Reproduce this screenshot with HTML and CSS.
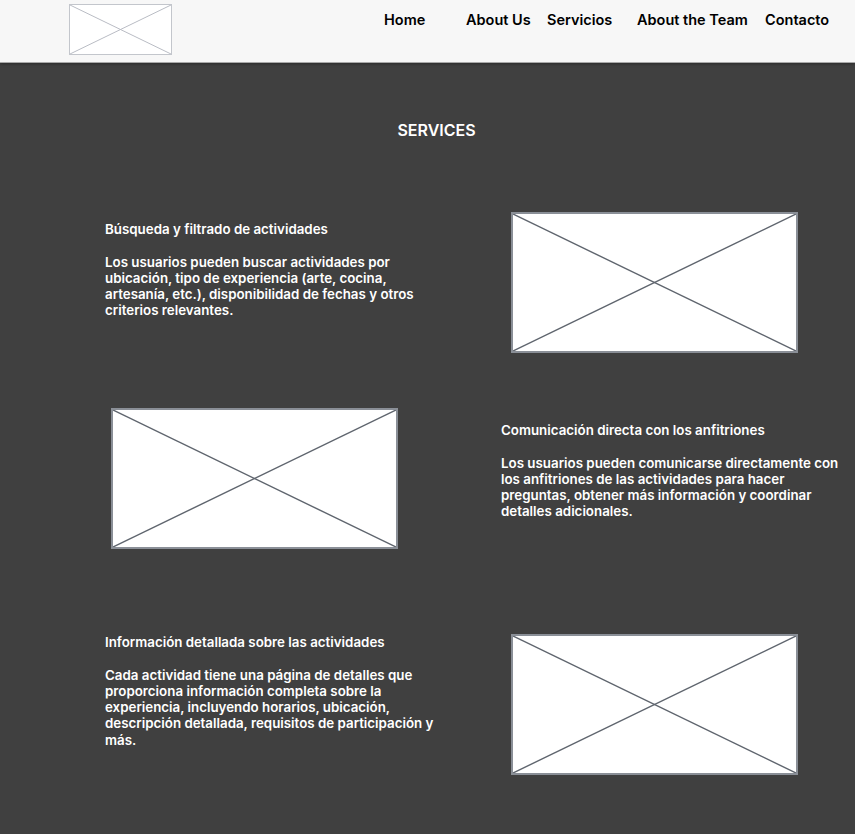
FILE: index.html
```html
<!DOCTYPE html>
<html lang="es">
<head>
<meta charset="utf-8">
<title>Services</title>
<link rel="stylesheet" href="styles.css">
</head>
<body>
<header class="topbar">
  <div class="logo">
    <svg viewBox="0 0 100 50" preserveAspectRatio="none" width="100%" height="100%">
      <line x1="0" y1="0" x2="100" y2="50" vector-effect="non-scaling-stroke"/>
      <line x1="100" y1="0" x2="0" y2="50" vector-effect="non-scaling-stroke"/>
    </svg>
  </div>
  <nav class="nav">
    <a class="nav-item nav-home" href="#">Home</a>
    <a class="nav-item nav-about" href="#">About Us</a>
    <a class="nav-item nav-serv" href="#">Servicios</a>
    <a class="nav-item nav-team" href="#">About the Team</a>
    <a class="nav-item" href="#">Contacto</a>
  </nav>
</header>

<main class="content">
  <h1 class="title">SERVICES</h1>

  <section class="row row-1">
    <div class="text text-left t1">
      <p>Búsqueda y filtrado de actividades</p>
      <p>Los usuarios pueden buscar actividades por ubicación, tipo de experiencia (arte, cocina, artesanía, etc.), disponibilidad de fechas y otros criterios relevantes.</p>
    </div>
    <div class="pic pic-right">
      <svg viewBox="0 0 100 50" preserveAspectRatio="none" width="100%" height="100%">
        <line x1="0" y1="0" x2="100" y2="50" vector-effect="non-scaling-stroke"/>
        <line x1="100" y1="0" x2="0" y2="50" vector-effect="non-scaling-stroke"/>
      </svg>
    </div>
  </section>

  <section class="row row-2">
    <div class="pic pic-left">
      <svg viewBox="0 0 100 50" preserveAspectRatio="none" width="100%" height="100%">
        <line x1="0" y1="0" x2="100" y2="50" vector-effect="non-scaling-stroke"/>
        <line x1="100" y1="0" x2="0" y2="50" vector-effect="non-scaling-stroke"/>
      </svg>
    </div>
    <div class="text text-right t2">
      <p>Comunicación directa con los anfitriones</p>
      <p>Los usuarios pueden comunicarse directamente con los anfitriones de las actividades para hacer preguntas, obtener más información y coordinar detalles adicionales.</p>
    </div>
  </section>

  <section class="row row-3">
    <div class="text text-left t3">
      <p>Información detallada sobre las actividades</p>
      <p>Cada actividad tiene una página de detalles que proporciona información completa sobre la experiencia, incluyendo horarios, ubicación, descripción detallada, requisitos de participación y más.</p>
    </div>
    <div class="pic pic-right">
      <svg viewBox="0 0 100 50" preserveAspectRatio="none" width="100%" height="100%">
        <line x1="0" y1="0" x2="100" y2="50" vector-effect="non-scaling-stroke"/>
        <line x1="100" y1="0" x2="0" y2="50" vector-effect="non-scaling-stroke"/>
      </svg>
    </div>
  </section>
</main>
</body>
</html>
```

FILE: styles.css
```css
* { box-sizing: border-box; }

html, body {
  margin: 0;
  padding: 0;
}

body {
  background: #404040;
  font-family: Inter, "Noto Sans", sans-serif;
  color: #ffffff;
  min-height: 834px;
}

.topbar {
  display: flex;
  align-items: flex-start;
  height: 63px;
  background: #f7f7f7;
  border-bottom: 1px solid #a9a9a9;
  box-shadow: 0 1px 3px rgba(0, 0, 0, 0.35);
  padding-left: 69px;
  position: relative;
  z-index: 1;
}

.logo {
  width: 103px;
  height: 51px;
  margin-top: 4px;
  border: 1px solid #c3c6cc;
  background: #ffffff;
}

.logo svg { display: block; }
.logo line { stroke: #b9bcc4; stroke-width: 1; }

.nav {
  display: flex;
  margin-left: 212px;
  padding-top: 11px;
}

.nav-item {
  font-size: 14.5px;
  font-weight: 600;
  line-height: 18px;
  color: #000000;
  text-decoration: none;
  white-space: nowrap;
}

.nav-home { width: 82px; }
.nav-about { width: 81px; }
.nav-serv { width: 90px; }
.nav-team { width: 128px; }

.content {
  padding-bottom: 60px;
}

.title {
  margin: 0;
  padding-top: 58px;
  text-align: center;
  font-size: 16px;
  font-weight: 600;
  line-height: 18px;
  margin-left: 18px;
}

.row {
  display: grid;
  grid-template-columns: 427px 428px;
  align-items: start;
}

.row-1 { margin-top: 73px; }
.row-2 { margin-top: 55px; }
.row-3 { margin-top: 85px; }

.text {
  font-size: 13.33px;
  font-weight: 600;
  line-height: 16.3px;
}

.text p { margin: 0; }
.text p + p { margin-top: 16.3px; }

.text-left {
  margin-left: 105px;
  width: 340px;
}

.text-right {
  margin-left: 74px;
  width: 345px;
}

.t1 { margin-top: 9px; }
.t2 { margin-top: 14px; }
.t3 { margin-top: 0; }

.pic {
  width: 287px;
  height: 141px;
  background: #ffffff;
  border: 2px solid #8a8f97;
}

.pic svg { display: block; }
.pic line { stroke: #5f656e; stroke-width: 1.4; }

.pic-right { margin-left: 84px; }
.pic-left { margin-left: 111px; }
```
